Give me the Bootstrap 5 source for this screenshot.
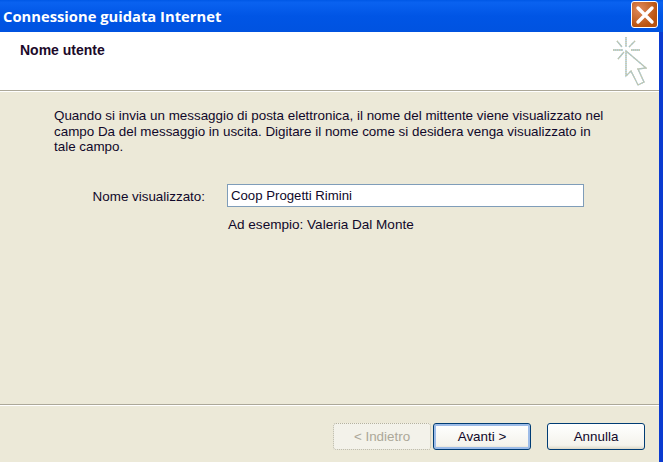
<!doctype html>
<html lang="it"><head><meta charset="utf-8"><title>Connessione guidata Internet</title>
<link href="https://cdn.jsdelivr.net/npm/bootstrap@5.3.0/dist/css/bootstrap.min.css" rel="stylesheet">
<style>
html,body{width:663px;height:462px;overflow:hidden;margin:0}
body{background:#ece9d8;font-family:"Liberation Sans",Arial,sans-serif;font-size:13.4px;color:#10082a;line-height:15.5px}
.wiz{width:663px;height:462px;border-right:4px solid #0b3bd0}
.wiz-title{height:32px;flex:none;background:linear-gradient(#0058e6 0,#0a62f0 8%,#0055e5 50%,#0053e0 100%);padding:0 3px 0 3px;margin-right:-4px}
.wiz-title span{font-family:"Open Sans",sans-serif;font-weight:700;font-size:14.75px;color:#fff;line-height:32px}
.wiz-close{width:27px;height:27px;border:1px solid #fff;border-radius:3px;background:radial-gradient(circle at 30% 30%,#e08a5c,#b9530f 70%);margin-right:2px;margin-top:-3px}
.wiz-head{height:58px;flex:none;background:#fff;padding:11px 0 0 20px;position:relative}
.wiz-head b{font-size:14px;color:#1c0a2a}
.wiz-rule{flex:none;background:#aca899;border-bottom:1px solid #fff;box-sizing:content-box;height:1px}
.wiz-spark{position:absolute;left:611px;top:4px}
.wiz-body{padding:16px 0 0 54px}
.wiz-intro{width:570px;margin:0}
.wiz-form{margin-top:29px}
.wiz-label{width:195px;text-align:right;padding:5px 22px 0 0;flex:none;box-sizing:border-box;margin-left:-22px}
.wiz-field{width:357px;height:23px;border:1px solid #7f9db9;background:#fff;padding:3px 0 0 3px;flex:none;font-size:13.2px}
.wiz-hint{margin-top:10px;margin-left:174px;font-size:13.55px}
.wiz-foot{margin-top:auto;height:58px;flex:none;border-top:1px solid #aca899;box-shadow:inset 0 1px 0 #fff;padding:18px 14px 0 0}
.wiz-btn{width:98px;height:27px;padding:0;font-size:13.4px;line-height:25px;color:#10082a;border:1px solid #003c74;border-radius:3px;background:linear-gradient(#fff,#f4f3ec 85%,#dcd8c8);font-family:inherit}
.wiz-btn:disabled{opacity:1;color:#aca899;border:1px dotted #b5b29f;background:#f3f2ea}
.wiz-btn.wiz-def{box-shadow:inset 0 0 0 2px #9dbce8;margin-left:2px}
</style></head><body>
<div class="wiz d-flex flex-column">
 <div class="wiz-title d-flex justify-content-between align-items-center"><span>Connessione guidata Internet</span>
  <div class="wiz-close d-flex align-items-center justify-content-center"><svg width="20" height="20" viewBox="0 0 20 20"><path d="M3 3L17 17M17 3L3 17" stroke="#fff" stroke-width="3.4" stroke-linecap="round"/></svg></div></div>
 <div class="wiz-head"><b>Nome utente</b>
  <svg class="wiz-spark" width="36" height="50" viewBox="0 0 36 50" fill="none" stroke-width="1.3">
   <path stroke="#9fc3d6" d="M15 1V11M24 5L18 11M20 14H29M2 14H12M6 5L11 11M7 23L13 16M15 15V40L20 35L27 49L33 46L27 33L35 32Z"/>
   <path stroke="#cfc79c" stroke-dasharray="1 1" d="M15 1V11M24 5L18 11M20 14H29M2 14H12M6 5L11 11M7 23L13 16M15 15V40L20 35L27 49L33 46L27 33L35 32Z"/></svg></div>
 <div class="wiz-rule"></div>
 <div class="wiz-body">
  <p class="wiz-intro">Quando si invia un messaggio di posta elettronica, il nome del mittente viene visualizzato nel<br>campo Da del messaggio in uscita. Digitare il nome come si desidera venga visualizzato in<br>tale campo.</p>
  <div class="wiz-form d-flex"><div class="wiz-label">Nome visualizzato:</div><div class="wiz-field">Coop Progetti Rimini</div></div>
  <div class="wiz-hint">Ad esempio: Valeria Dal Monte</div>
 </div>
 <div class="wiz-foot d-flex justify-content-end">
  <button class="btn wiz-btn" disabled>&lt; Indietro</button>
  <button class="btn wiz-btn wiz-def">Avanti &gt;</button>
  <button class="btn wiz-btn ms-3">Annulla</button>
 </div>
</div>
</body></html>
